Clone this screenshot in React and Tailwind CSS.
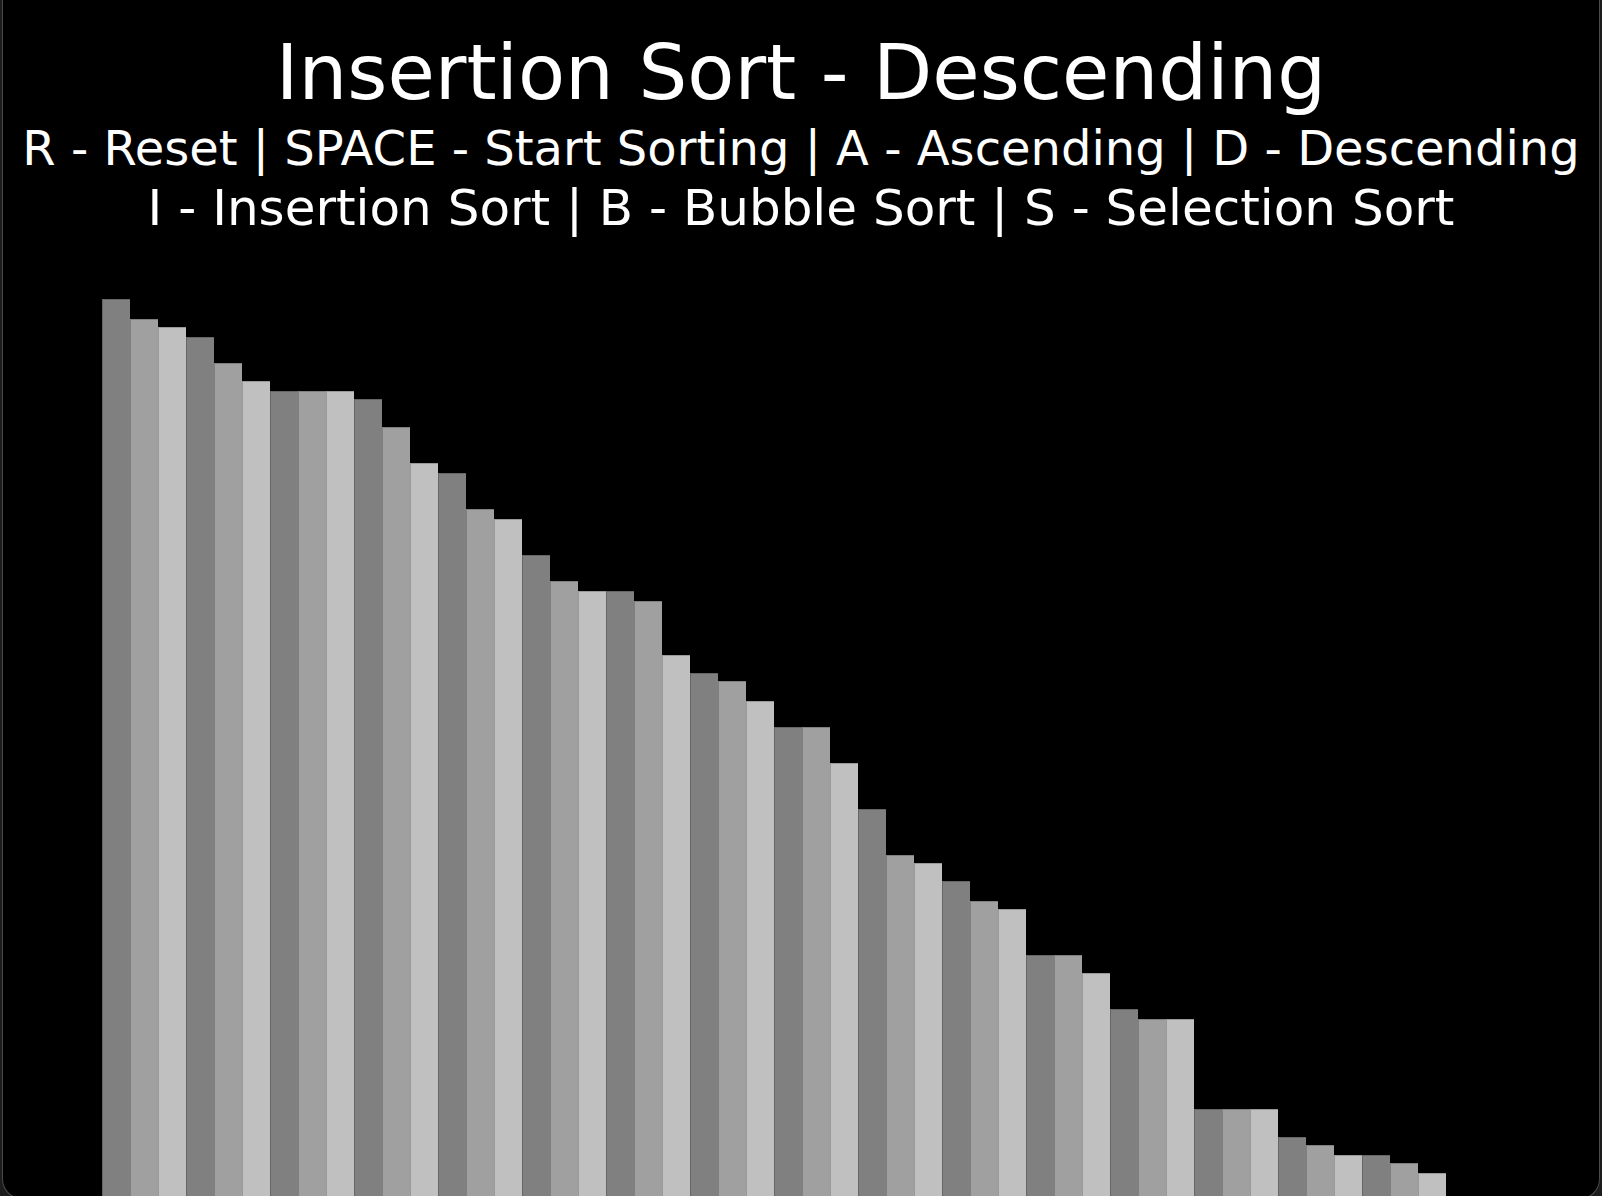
// bar tops in px, measured from the page top
const tops = [
  298, 318, 326, 336, 362, 380, 390, 390, 390, 398, 426, 462, 472, 508, 518, 554,
  580, 590, 590, 600, 654, 672, 680, 700, 726, 726, 762, 808, 854, 862, 880, 900,
  908, 954, 954, 972, 1008, 1018, 1018, 1108, 1108, 1108, 1136, 1144, 1154, 1154, 1162, 1172,
]

const shades = ["bg-[#808080]", "bg-[#a0a0a0]", "bg-[#c0c0c0]"]
const BOTTOM = 1197

export default function App() {
  return (
    <div className="h-[1196px] overflow-hidden bg-[#1c1c1c] px-[2px]">
      <div className="flex h-[1199px] flex-col overflow-hidden rounded-b-[20px] border-x border-b border-[#4a4a4a] bg-black font-['Comic_Sans_MS','DejaVu_Sans',sans-serif] text-white">
        {/* header */}
        <div className="flex flex-col items-center pt-[28px]">
          <h1 className="whitespace-nowrap text-[77px] leading-[90px]">Insertion Sort - Descending</h1>
          <p className="whitespace-nowrap text-[48px] leading-[60px]">
            R - Reset | SPACE - Start Sorting | A - Ascending | D - Descending
          </p>
          <p className="whitespace-nowrap text-[50px] leading-[60px]">
            I - Insertion Sort | B - Bubble Sort | S - Selection Sort
          </p>
        </div>

        {/* bars */}
        <div className="flex flex-1 items-end pl-[99px]">
          {tops.map((t, i) => (
            <div
              key={i}
              className={`w-[28px] shrink-0 border-l border-t border-black/20 ${shades[i % 3]}`}
              style={{ height: BOTTOM - t }}
            />
          ))}
        </div>
      </div>
    </div>
  )
}
